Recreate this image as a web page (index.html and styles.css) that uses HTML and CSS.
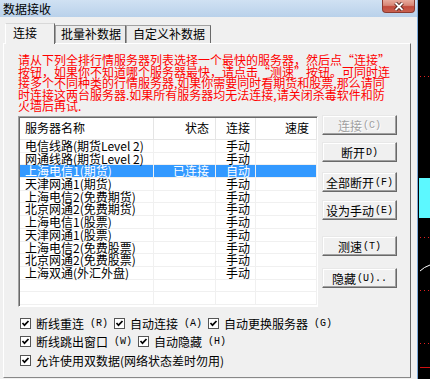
FILE: index.html
```html
<!DOCTYPE html>
<html lang="zh-CN">
<head>
  <meta charset="UTF-8">
  <title>数据接收</title>
  <link rel="stylesheet" href="styles.css">
</head>
<body>
  <div class="screen">
    <div class="window">
      <div class="titlebar">
        <span class="title">数据接收</span>
        <span class="close">
          <svg width="14" height="9" viewBox="0 0 14 9">
            <path d="M3.5 1 L10.5 8 M10.5 1 L3.5 8" stroke="#4a1d18" stroke-width="3.6"/>
            <path d="M3.5 1 L10.5 8 M10.5 1 L3.5 8" stroke="#fff" stroke-width="1.8"/>
          </svg>
        </span>
      </div>

      <div class="client">
        <div class="tabs">
          <div class="tab active">连接</div>
          <div class="tab tab-batch">批量补数据</div>
          <div class="tab tab-custom">自定义补数据</div>
        </div>

        <div class="panel">
          <p class="notice">请从下列全排行情服务器列表选择一个最快的服务器，然后点“连接”<br>按钮，如果你不知道哪个服务器最快，请点击“测速”按钮。可同时连<br>接多个不同种类的行情服务器,如果你需要同时看期货和股票,那么请同<br>时连接这两台服务器.如果所有服务器均无法连接,请关闭杀毒软件和防<br>火墙后再试.</p>

          <div class="middle">
            <div class="listbox">
              <div class="row head"><span class="c-name">服务器名称</span><span class="c-state">状态</span><span class="c-conn">连接</span><span class="c-speed">速度</span></div>
              <div class="row"><span class="c-name">电信线路(期货Level 2)</span><span class="c-state"></span><span class="c-conn">手动</span><span class="c-speed"></span></div>
              <div class="row"><span class="c-name">网通线路(期货Level 2)</span><span class="c-state"></span><span class="c-conn">手动</span><span class="c-speed"></span></div>
              <div class="row sel"><span class="c-name">上海电信1(期货)</span><span class="c-state">已连接</span><span class="c-conn">自动</span><span class="c-speed"></span></div>
              <div class="row"><span class="c-name">天津网通1(期货)</span><span class="c-state"></span><span class="c-conn">手动</span><span class="c-speed"></span></div>
              <div class="row"><span class="c-name">上海电信2(免费期货)</span><span class="c-state"></span><span class="c-conn">手动</span><span class="c-speed"></span></div>
              <div class="row"><span class="c-name">北京网通2(免费期货)</span><span class="c-state"></span><span class="c-conn">手动</span><span class="c-speed"></span></div>
              <div class="row"><span class="c-name">上海电信1(股票)</span><span class="c-state"></span><span class="c-conn">手动</span><span class="c-speed"></span></div>
              <div class="row"><span class="c-name">天津网通1(股票)</span><span class="c-state"></span><span class="c-conn">手动</span><span class="c-speed"></span></div>
              <div class="row"><span class="c-name">上海电信2(免费股票)</span><span class="c-state"></span><span class="c-conn">手动</span><span class="c-speed"></span></div>
              <div class="row"><span class="c-name">北京网通2(免费股票)</span><span class="c-state"></span><span class="c-conn">手动</span><span class="c-speed"></span></div>
              <div class="row"><span class="c-name">上海双通(外汇外盘)</span><span class="c-state"></span><span class="c-conn">手动</span><span class="c-speed"></span></div>
              <div class="row"><span class="c-name"></span><span class="c-state"></span><span class="c-conn"></span><span class="c-speed"></span></div>
              <div class="row"><span class="c-name"></span><span class="c-state"></span><span class="c-conn"></span><span class="c-speed"></span></div>
            </div>

            <div class="buttons">
              <div class="btn disabled">连接<span class="key">(C)</span></div>
              <div class="btn btn-2">断开<span class="key">D)</span></div>
              <div class="btn btn-3">全部断开<span class="key">(F)</span></div>
              <div class="btn btn-4">设为手动<span class="key">(E)</span></div>
              <div class="btn btn-5">测速<span class="key">(T)</span></div>
              <div class="btn btn-6">隐藏<span class="key">(U)..</span></div>
            </div>
          </div>

          <div class="options">
            <div class="opt-row">
              <label class="check"><svg class="box" width="11" height="11" viewBox="0 0 11 11"><rect x="0.5" y="0.5" width="10" height="10" fill="#fff" stroke="#555"/><path d="M2.5 5 L4.5 7.2 L8.5 3" stroke="#000" stroke-width="1.7" fill="none"/></svg>断线重连<span class="key">(R)</span></label>
              <label class="check"><svg class="box" width="11" height="11" viewBox="0 0 11 11"><rect x="0.5" y="0.5" width="10" height="10" fill="#fff" stroke="#555"/><path d="M2.5 5 L4.5 7.2 L8.5 3" stroke="#000" stroke-width="1.7" fill="none"/></svg>自动连接<span class="key">(A)</span></label>
              <label class="check"><svg class="box" width="11" height="11" viewBox="0 0 11 11"><rect x="0.5" y="0.5" width="10" height="10" fill="#fff" stroke="#555"/><path d="M2.5 5 L4.5 7.2 L8.5 3" stroke="#000" stroke-width="1.7" fill="none"/></svg>自动更换服务器<span class="key">(G)</span></label>
            </div>
            <div class="opt-row">
              <label class="check"><svg class="box" width="11" height="11" viewBox="0 0 11 11"><rect x="0.5" y="0.5" width="10" height="10" fill="#fff" stroke="#555"/><path d="M2.5 5 L4.5 7.2 L8.5 3" stroke="#000" stroke-width="1.7" fill="none"/></svg>断线跳出窗口<span class="key">(W)</span></label>
              <label class="check"><svg class="box" width="11" height="11" viewBox="0 0 11 11"><rect x="0.5" y="0.5" width="10" height="10" fill="#fff" stroke="#555"/><path d="M2.5 5 L4.5 7.2 L8.5 3" stroke="#000" stroke-width="1.7" fill="none"/></svg>自动隐藏<span class="key">(H)</span></label>
            </div>
            <div class="opt-row">
              <label class="check"><svg class="box" width="11" height="11" viewBox="0 0 11 11"><rect x="0.5" y="0.5" width="10" height="10" fill="#fff" stroke="#555"/><path d="M2.5 5 L4.5 7.2 L8.5 3" stroke="#000" stroke-width="1.7" fill="none"/></svg>允许使用双数据(网络状态差时勿用)</label>
            </div>
          </div>
        </div>
      </div>
    </div>

    <svg class="backdrop" width="12" height="379" viewBox="0 0 12 379">
      <rect width="12" height="379" fill="#000"/>
      <line x1="2" y1="76.5" x2="12" y2="76.5" stroke="#e02020" stroke-dasharray="1 3"/>
      <rect x="1" y="178" width="11" height="40" fill="#5cf8ff"/>
      <line x1="2" y1="237.5" x2="12" y2="237.5" stroke="#e02020" stroke-dasharray="1 3"/>
      <path d="M2 271 Q6 267 12 265" stroke="#fff" fill="none"/>
      <line x1="2" y1="290.5" x2="12" y2="290.5" stroke="#e02020" stroke-dasharray="1 3"/>
      <line x1="2" y1="343.5" x2="12" y2="343.5" stroke="#e02020" stroke-dasharray="1 3"/>
      <line x1="2" y1="367.5" x2="12" y2="367.5" stroke="#d01010"/>
    </svg>
  </div>
</body>
</html>
```

FILE: styles.css
```css
body {
  margin: 0;
  background: #000;
  font-family: "Noto Sans CJK SC", sans-serif;
  font-size: 12px;
  color: #000;
  overflow: hidden;
}
.screen {
  display: flex;
  width: 430px;
  height: 379px;
  overflow: hidden;
}
.window {
  flex: none;
  width: 417px;
  border-right: 1px solid #7eaadb;
  background: #f0f0f0;
}
.backdrop {
  flex: none;
  display: block;
}

/* title bar */
.titlebar {
  height: 17px;
  display: flex;
  justify-content: space-between;
  align-items: flex-start;
  background: linear-gradient(#d0e1f3, #b9d1ea);
}
.title {
  padding-left: 3px;
  line-height: 17px;
}
.close {
  width: 31px;
  height: 12px;
  margin-right: 2px;
  border: 1px solid #8a3a30;
  border-top: none;
  border-radius: 0 0 4px 4px;
  background: linear-gradient(#e8ab9d 0%, #d78676 45%, #c24a3c 55%, #c9604f 100%);
  display: flex;
  justify-content: center;
  align-items: center;
}

/* tabs */
.client {
  padding: 6px 6px 0 3px;
}
.tabs {
  display: flex;
  align-items: flex-end;
  height: 20px;
  padding-left: 2px;
  position: relative;
  z-index: 1;
}
.tab {
  box-sizing: border-box;
  height: 18px;
  line-height: 16px;
  padding-left: 5px;
  border: 1px solid #a0a0a0;
  border-bottom: none;
  border-right-color: #696969;
  background: #ececec;
  white-space: nowrap;
}
.tab.active {
  width: 50px;
  height: 21px;
  margin-bottom: -1px;
  padding-left: 7px;
  line-height: 17px;
  border-top-color: #d8d8d8;
  border-left-color: #fff;
  background: #f0f0f0;
}
.tab-batch {
  width: 71px;
}
.tab-custom {
  width: 85px;
  padding-left: 6px;
}

/* panel */
.panel {
  box-sizing: border-box;
  height: 335px;
  border: 1px solid #a0a0a0;
  border-top-color: #fff;
  border-left-color: #fff;
  border-right-color: #696969;
  border-bottom-color: #888;
  padding: 10px 0 0 14px;
}
.notice {
  margin: 0;
  color: #f00;
  line-height: 11.5px;
  white-space: nowrap;
}
.middle {
  display: flex;
  align-items: flex-start;
  gap: 4px;
  margin-top: 3.5px;
}

/* server list */
.listbox {
  box-sizing: border-box;
  width: 300px;
  height: 191px;
  margin-top: 1px;
  padding: 1px 0 0 1px;
  border: 1px solid;
  border-color: #a0a0a0 #fff #fff #a0a0a0;
  box-shadow: inset 1px 1px 0 #696969;
  background: #fff;
  overflow: hidden;
}
.row {
  display: flex;
  box-sizing: border-box;
  height: 12.7px;
  line-height: 12px;
  border-bottom: 1px solid #f0f0f0;
  white-space: nowrap;
}
.row span {
  box-sizing: border-box;
  border-right: 1px solid #f0f0f0;
}
.c-name {
  width: 134px;
  padding-left: 5px;
}
.c-state {
  width: 62px;
  padding-right: 6px;
  text-align: right;
}
.c-conn {
  width: 40px;
  padding-left: 10px;
}
.c-speed {
  width: 61px;
  padding-right: 7px;
  text-align: right;
}
.row.head {
  height: 22px;
  line-height: 20px;
  border-bottom-color: #e5e5e5;
}
.row.head span {
  border-right-color: #e5e5e5;
}
.row.sel {
  background: #3399ff;
  color: #fff;
}

/* buttons */
.buttons {
  display: flex;
  flex-direction: column;
  width: 75px;
}
.btn {
  box-sizing: border-box;
  height: 20px;
  border: 1px solid;
  border-color: #e8e8e8 #696969 #696969 #e8e8e8;
  box-shadow: inset -1px -1px 0 #a0a0a0, inset 1px 1px 0 #fff;
  background: #f0f0f0;
  display: flex;
  align-items: center;
  justify-content: center;
  white-space: nowrap;
}
.btn.disabled {
  color: #a0a0a0;
  text-shadow: 1px 1px 0 #fff;
}
.btn-2 { margin-top: 7px; }
.btn-3 { margin-top: 10px; }
.btn-4 { margin-top: 8px; }
.btn-5 { margin-top: 16px; }
.btn-6 { margin-top: 12px; }

.key {
  font-family: "Liberation Mono", monospace;
  font-size: 10px;
  margin-left: 1px;
}

/* options */
.options {
  margin-top: 7px;
}
.opt-row {
  display: flex;
  align-items: center;
  gap: 6px;
  height: 18.5px;
  padding-left: 2px;
}
.check {
  display: flex;
  align-items: center;
  gap: 5px;
  white-space: nowrap;
}
.box {
  flex: none;
  display: block;
}
```
